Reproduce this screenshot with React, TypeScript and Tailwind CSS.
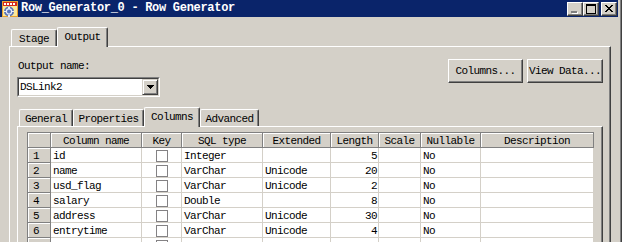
import React from 'react';

const W = ['w-[23px]', 'w-[91px]', 'w-[40px]', 'w-[81px]', 'w-[68px]', 'w-[48px]', 'w-[42px]', 'w-[60px]', 'w-[113px]'];
const H = ['', 'Column name', 'Key', 'SQL type', 'Extended', 'Length', 'Scale', 'Nullable', 'Description'];

const rows: string[][] = [
  ['1', 'id', 'Integer', '', '5', 'No'],
  ['2', 'name', 'VarChar', 'Unicode', '20', 'No'],
  ['3', 'usd_flag', 'VarChar', 'Unicode', '2', 'No'],
  ['4', 'salary', 'Double', '', '8', 'No'],
  ['5', 'address', 'VarChar', 'Unicode', '30', 'No'],
  ['6', 'entrytime', 'VarChar', 'Unicode', '4', 'No'],
  ['', '', '', '', '', ''],
];

function AppIcon() {
  return (
    <svg width="16" height="16" viewBox="0 0 16 16" className="ml-[2px] mt-[1px] shrink-0" shapeRendering="crispEdges">
      <rect x="0" y="0" width="16" height="16" fill="#e8a030" />
      <rect x="1" y="1" width="14" height="14" fill="#fbe89a" />
      <rect x="1" y="1" width="14" height="4" fill="#d82818" />
      <rect x="2" y="2" width="2" height="2" fill="#ffffff" />
      <rect x="5" y="2" width="2" height="2" fill="#ffffff" />
      <rect x="8" y="2" width="2" height="2" fill="#ffffff" />
      <rect x="11" y="2" width="2" height="2" fill="#ffffff" />
      <circle cx="7" cy="10.5" r="5" fill="#5a74b8" shapeRendering="auto" />
      <circle cx="7" cy="10.5" r="2.6" fill="none" stroke="#e8ecf8" strokeWidth="1.2" shapeRendering="auto" />
      <rect x="6.4" y="5.5" width="1.2" height="2" fill="#e8ecf8" />
      <rect x="6.4" y="13.5" width="1.2" height="2" fill="#e8ecf8" />
      <rect x="2" y="9.9" width="2" height="1.2" fill="#e8ecf8" />
      <rect x="10" y="9.9" width="2" height="1.2" fill="#e8ecf8" />
    </svg>
  );
}

function TitleBtn({ kind }: { kind: 'min' | 'max' | 'close' }) {
  return (
    <div className="relative w-[16px] h-[14px] bg-[#d4d0c8] border border-t-white border-l-white border-r-[#404040] border-b-[#404040] shadow-[inset_-1px_-1px_0_#808080]">
      {kind === 'min' && (
        <svg width="16" height="14" className="absolute left-[-1px] top-[-1px]" shapeRendering="crispEdges">
          <rect x="5" y="10" width="6" height="2" fill="#ffffff" />
          <rect x="4" y="9" width="6" height="2" fill="#808080" />
        </svg>
      )}
      {kind === 'max' && (
        <svg width="16" height="14" className="absolute left-[-1px] top-[-1px]" shapeRendering="crispEdges">
          <rect x="3" y="2" width="9" height="9" fill="none" stroke="#000" strokeWidth="1" transform="translate(0.5 0.5)" />
          <rect x="3" y="2" width="10" height="2" fill="#000" />
        </svg>
      )}
      {kind === 'close' && (
        <svg width="16" height="14" className="absolute left-[-1px] top-[-1px]" shapeRendering="crispEdges">
          <path d="M4 3h2v1H4zM10 3h2v1h-2zM5 4h2v1H5zM9 4h2v1H9zM6 5h4v1H6zM7 6h2v1H7zM6 7h4v1H6zM5 8h2v1H5zM9 8h2v1H9zM4 9h2v1H4zM10 9h2v1h-2z" fill="#000" />
        </svg>
      )}
    </div>
  );
}

function Tab({ label, selected, w }: { label: string; selected?: boolean; w: string }) {
  return (
    <div
      className={`${w} ${selected ? 'h-[20px] -mb-px z-10' : 'h-[17px]'} relative shrink-0 bg-[#d4d0c8] border-t border-l border-r border-t-white border-l-white border-r-[#404040] rounded-tl-[2px] rounded-tr-[2px] shadow-[inset_-1px_0_0_#808080] flex justify-center`}
    >
      <span className="pt-[3px] leading-[13px] whitespace-nowrap">{label}</span>
    </div>
  );
}

function Btn({ w, children }: { w: string; children: React.ReactNode }) {
  return (
    <div className={`${w} h-[24px] bg-[#d4d0c8] border border-t-white border-l-white border-r-[#404040] border-b-[#404040] shadow-[inset_-1px_-1px_0_#808080] flex items-center justify-center leading-[14px] whitespace-nowrap`}>
      {children}
    </div>
  );
}

function Combo() {
  return (
    <div className="mt-[4px] w-[143px] h-[20px] border border-t-[#808080] border-l-[#808080] border-b-white border-r-white">
      <div className="h-full border border-t-[#404040] border-l-[#404040] border-b-[#d4d0c8] border-r-[#d4d0c8] bg-white flex items-center">
        <span className="pl-[1px] flex-1 leading-[14px]">DSLink2</span>
        <div className="w-[16px] h-[16px] shrink-0 bg-[#d4d0c8] border border-t-[#d4d0c8] border-l-[#d4d0c8] border-r-[#404040] border-b-[#404040] shadow-[inset_1px_1px_0_#ffffff,inset_-1px_-1px_0_#808080] flex items-center justify-center">
          <svg width="7" height="4" shapeRendering="crispEdges">
            <path d="M0 0h7v1H0zM1 1h5v1H1zM2 2h3v1H2zM3 3h1v1H3z" fill="#000" />
          </svg>
        </div>
      </div>
    </div>
  );
}

const headCell = 'shrink-0 h-[15px] bg-[#d4d0c8] border-r border-b border-[#808080] shadow-[inset_1px_1px_0_#ffffff] pt-[3px] leading-[11px] whitespace-nowrap overflow-hidden';
const bodyCell = 'shrink-0 h-[15px] bg-white border-r border-b border-[#d4d0c8] pt-[3px] leading-[11px] whitespace-nowrap';

function Grid() {
  return (
    <div className="w-[567px] border-t border-l border-[#808080]">
      <div className="flex">
        {H.map((h, i) => (
          <div key={i} className={`${W[i]} ${headCell} text-center`}>{h}</div>
        ))}
      </div>
      {rows.map((r, idx) => (
        <div key={idx} className="flex">
          <div className={`${W[0]} ${headCell} pl-[5px]`}>{r[0]}</div>
          <div className={`${W[1]} ${bodyCell} pl-[2px]`}>{r[1]}</div>
          <div className={`${W[2]} shrink-0 h-[15px] bg-white border-r border-b border-[#d4d0c8] flex justify-center`}>
            <div className="mt-[2px] w-[12px] h-[12px] border border-[#848284] bg-white" />
          </div>
          <div className={`${W[3]} ${bodyCell} pl-[2px]`}>{r[2]}</div>
          <div className={`${W[4]} ${bodyCell} pl-[2px]`}>{r[3]}</div>
          <div className={`${W[5]} ${bodyCell} text-right pr-[1px]`}>{r[4]}</div>
          <div className={`${W[6]} ${bodyCell}`}></div>
          <div className={`${W[7]} ${bodyCell} pl-[2px]`}>{r[5]}</div>
          <div className={`${W[8]} ${bodyCell}`}></div>
        </div>
      ))}
    </div>
  );
}

export default function App() {
  return (
    <div className="w-[622px] h-[242px] overflow-hidden bg-[#d4d0c8] flex text-[11px] tracking-[-0.6px] text-black font-['Liberation_Mono',monospace]">
      <div className="w-[618px] flex flex-col">
        <div className="h-[17px] shrink-0 bg-[#0a246a] flex items-start">
          <AppIcon />
          <span className="ml-[3px] text-white font-bold text-[12px] tracking-[-0.3px] leading-[17px] whitespace-nowrap">
            Row_Generator_0 - Row Generator
          </span>
          <div className="ml-auto mr-[1px] mt-[2px] flex">
            <TitleBtn kind="min" />
            <TitleBtn kind="max" />
            <div className="w-[2px]" />
            <TitleBtn kind="close" />
          </div>
        </div>
        <div className="flex-1 min-h-0 flex flex-col pt-[10px] pl-[9px] pr-[7px]">
          <div className="flex items-end h-[19px] pl-[2px] shrink-0">
            <Tab label="Stage" w="w-[46px]" />
            <Tab label="Output" w="w-[51px]" selected />
          </div>
          <div className="flex-1 flex flex-col border-t border-l border-r border-t-white border-l-white border-r-[#404040] shadow-[inset_-1px_0_0_#808080] pl-[7px] pr-[7px] pt-[12px]">
            <div className="flex justify-between items-start">
              <div className="flex flex-col">
                <div className="leading-[14px] h-[14px] pl-[1px] whitespace-nowrap">Output name:</div>
                <Combo />
              </div>
              <div className="flex gap-[4px]">
                <Btn w="w-[75px]">Columns...</Btn>
                <Btn w="w-[76px]">View Data...</Btn>
              </div>
            </div>
            <div className="mt-[10px] flex items-end h-[19px] pl-[2px] shrink-0">
              <Tab label="General" w="w-[54px]" />
              <Tab label="Properties" w="w-[71px]" />
              <Tab label="Columns" w="w-[56px]" selected />
              <Tab label="Advanced" w="w-[59px]" />
            </div>
            <div className="flex-1 border-t border-l border-r border-t-white border-l-white border-r-[#404040] shadow-[inset_-1px_0_0_#808080] pl-[9px] pt-[5px]">
              <Grid />
            </div>
          </div>
        </div>
      </div>
      <div className="w-[4px] flex shrink-0">
        <div className="w-[2px] bg-[#d4d0c8]" />
        <div className="w-px bg-[#808080]" />
        <div className="w-px bg-[#404040]" />
      </div>
    </div>
  );
}
